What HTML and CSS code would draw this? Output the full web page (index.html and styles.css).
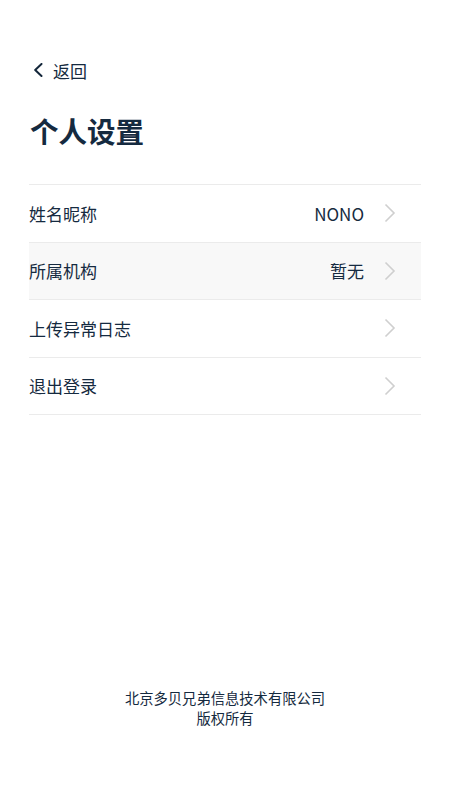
FILE: index.html
```html
<!DOCTYPE html>
<html lang="zh-CN">
<head>
  <meta charset="UTF-8">
  <meta name="viewport" content="width=device-width, initial-scale=1.0">
  <title>个人设置</title>
  <link rel="stylesheet" href="styles.css">
</head>
<body>
  <div class="page">
    <div class="back">
      <svg class="back-icon" width="11" height="14" viewBox="0 0 11 14">
        <path d="M8.5 1 L2.2 7 L8.5 13" fill="none" stroke="#13263a" stroke-width="2" stroke-linecap="round" stroke-linejoin="round"/>
      </svg>
      <span>返回</span>
    </div>
    <h1 class="title">个人设置</h1>

    <div class="list">
      <div class="row">
        <span class="label">姓名昵称</span>
        <span class="value">NONO</span>
        <svg class="arrow" width="12" height="20" viewBox="0 0 12 20">
          <path d="M1.5 1.5 L10 10 L1.5 18.5" fill="none" stroke="#cfcfcf" stroke-width="1.6"/>
        </svg>
      </div>
      <div class="row active">
        <span class="label">所属机构</span>
        <span class="value">暂无</span>
        <svg class="arrow" width="12" height="20" viewBox="0 0 12 20">
          <path d="M1.5 1.5 L10 10 L1.5 18.5" fill="none" stroke="#cfcfcf" stroke-width="1.6"/>
        </svg>
      </div>
      <div class="row">
        <span class="label">上传异常日志</span>
        <span class="value"></span>
        <svg class="arrow" width="12" height="20" viewBox="0 0 12 20">
          <path d="M1.5 1.5 L10 10 L1.5 18.5" fill="none" stroke="#cfcfcf" stroke-width="1.6"/>
        </svg>
      </div>
      <div class="row">
        <span class="label">退出登录</span>
        <span class="value"></span>
        <svg class="arrow" width="12" height="20" viewBox="0 0 12 20">
          <path d="M1.5 1.5 L10 10 L1.5 18.5" fill="none" stroke="#cfcfcf" stroke-width="1.6"/>
        </svg>
      </div>
    </div>

    <div class="footer">
      <div>北京多贝兄弟信息技术有限公司</div>
      <div>版权所有</div>
    </div>
  </div>
</body>
</html>
```

FILE: styles.css
```css
html, body {
  margin: 0;
  padding: 0;
  background: #fff;
}
body {
  font-family: "Noto Sans CJK SC", "Noto Sans", sans-serif;
  color: #152a40;
}
.page {
  display: flex;
  flex-direction: column;
  min-height: 100vh;
  box-sizing: border-box;
  padding: 56px 29px 71px;
}
.back {
  display: flex;
  align-items: center;
  height: 28px;
  font-size: 17px;
  padding-left: 4px;
}
.back-icon {
  margin-right: 9px;
}
.title {
  margin: 27px 0 0 1px;
  font-size: 28.5px;
  line-height: 40px;
  font-weight: 700;
}
.list {
  margin-top: 33px;
  border-top: 1px solid #ebebeb;
}
.row {
  display: flex;
  align-items: center;
  height: 57.5px;
  box-sizing: border-box;
  border-bottom: 1px solid #ebebeb;
  font-size: 17px;
  padding-right: 25px;
}
.row.active {
  background: #f8f8f8;
}
.label {
  flex: 1;
}
.value {
  margin-right: 20px;
}
.arrow {
  display: block;
}
.footer {
  margin-top: auto;
  text-align: center;
  font-size: 14.3px;
  line-height: 20px;
}
```
